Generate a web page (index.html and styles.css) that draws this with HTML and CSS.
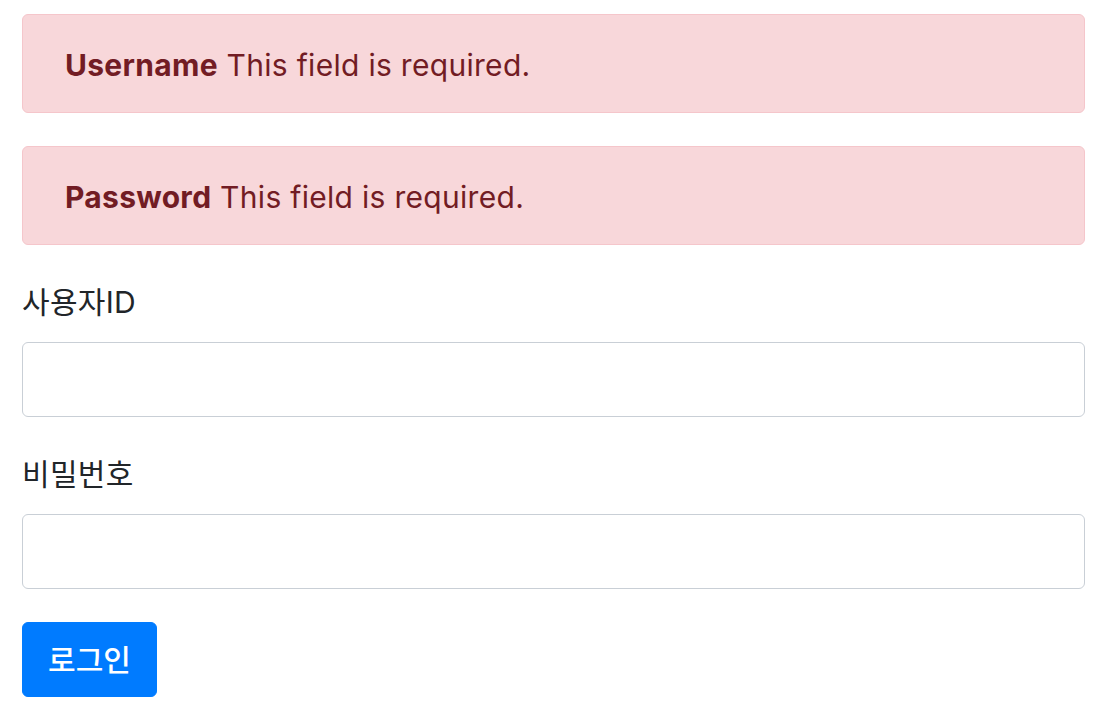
FILE: index.html
```html
<!DOCTYPE html>
<html lang="ko">
<head>
<meta charset="utf-8">
<link rel="stylesheet" href="styles.css">
</head>
<body>
<div class="page">
  <div class="alert"><strong>Username</strong> This field is required.</div>
  <div class="alert"><strong>Password</strong> This field is required.</div>
  <form class="form">
    <div class="group">
      <label class="label" for="u">사용자ID</label>
      <input class="input" id="u" type="text">
    </div>
    <div class="group">
      <label class="label" for="p">비밀번호</label>
      <input class="input" id="p" type="password">
    </div>
    <button class="btn" type="button">로그인</button>
  </form>
</div>
</body>
</html>
```
FILE: styles.css
```css
html, body {
  margin: 0;
  padding: 0;
  background: #fff;
}
body {
  font-family: Inter, "Noto Sans CJK KR", sans-serif;
  font-size: 30px;
  line-height: 42px;
  letter-spacing: 0.3px;
  color: #212529;
}
.page {
  padding: 14px 13px 0 22px;
}
.alert {
  background: #f8d7da;
  border: 1px solid #f5c6cb;
  color: #721c24;
  border-radius: 6px;
  padding: 29px 42px 26px;
  margin-bottom: 33px;
}
.alert strong {
  font-weight: 700;
}
.form {
  display: flex;
  flex-direction: column;
  align-items: flex-start;
}
.group {
  display: flex;
  flex-direction: column;
  align-self: stretch;
  margin-bottom: 33px;
}
.label {
  display: block;
  padding-top: 3px;
  margin-bottom: 19px;
}
.input {
  box-sizing: border-box;
  height: 75px;
  border: 1px solid #c9cfd6;
  border-radius: 6px;
  background: #fff;
  font: inherit;
  padding: 0 21px;
}
.btn {
  box-sizing: border-box;
  height: 75px;
  width: 135px;
  border: 1px solid #007bff;
  background: #007bff;
  color: #fff;
  border-radius: 6px;
  font-family: Inter, "Noto Sans CJK KR", sans-serif;
  font-size: 30px;
  font-weight: 500;
  line-height: 42px;
  padding: 0;
}
```
